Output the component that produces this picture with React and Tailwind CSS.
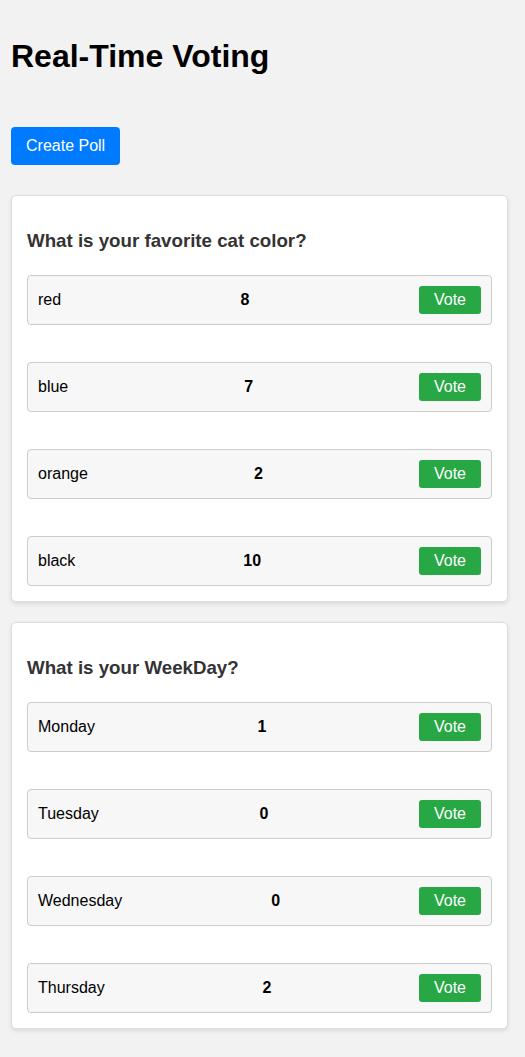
import React from "react";

const polls = [
  {
    id: 1,
    question: "What is your favorite cat color?",
    options: [
      { name: "red", votes: 8 },
      { name: "blue", votes: 7 },
      { name: "orange", votes: 2 },
      { name: "black", votes: 10 },
    ],
  },
  {
    id: 2,
    question: "What is your WeekDay?",
    options: [
      { name: "Monday", votes: 1 },
      { name: "Tuesday", votes: 0 },
      { name: "Wednesday", votes: 0 },
      { name: "Thursday", votes: 2 },
    ],
  },
];

function PollCard({ poll }) {
  return (
    <div className="mb-[20px] rounded-[5px] border border-[#dddddd] bg-white px-[15px] pt-[15px] pb-[15px] shadow-[0_2px_4px_rgba(0,0,0,0.1)]">
      <h3 className="mt-[19px] mb-[23px] text-[18.72px] font-bold leading-[22px] text-[#333333]">
        {poll.question}
      </h3>
      <div className="flex flex-col gap-[37px]">
        {poll.options.map((opt) => (
          <div
            key={opt.name}
            className="flex items-center justify-between rounded-[4px] border border-[#cccccc] bg-[#f7f7f7] p-[10px]"
          >
            <span className="mr-[10px] text-base leading-[18px] text-black">{opt.name}</span>
            <strong className="text-base leading-[18px] text-black">{opt.votes}</strong>
            <button className="rounded-[3px] bg-[#28a745] px-[15px] py-[5px] text-base leading-[18px] text-white">
              Vote
            </button>
          </div>
        ))}
      </div>
    </div>
  );
}

export default function App() {
  return (
    <div
      className="min-h-screen bg-[#f2f2f2] pl-[11px] pr-[17px] pt-[38px] pb-[8px]"
      style={{ fontFamily: '"Liberation Sans", Arial, sans-serif' }}
    >
      <h1 className="text-[32px] font-bold leading-[37px] text-black">Real-Time Voting</h1>
      <button className="mt-[52px] rounded-[4px] bg-[#007bff] px-[15px] py-[10px] text-base leading-[18px] text-white">
        Create Poll
      </button>
      <div className="mt-[30px]">
        {polls.map((p) => (
          <PollCard key={p.id} poll={p} />
        ))}
      </div>
    </div>
  );
}
